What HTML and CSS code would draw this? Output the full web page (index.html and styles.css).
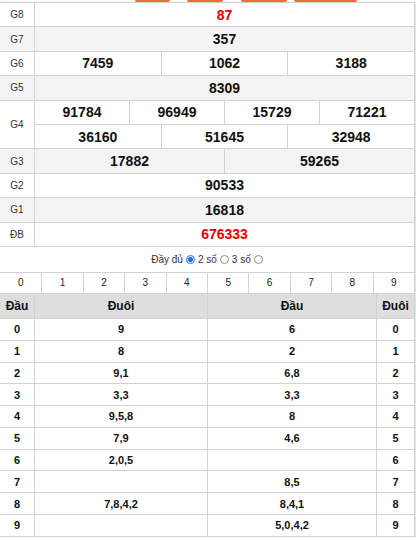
FILE: index.html
```html
<!DOCTYPE html>
<html lang="vi">
<head>
<meta charset="utf-8">
<link rel="stylesheet" href="styles.css">
</head>
<body>
<div class="tabs"><span class="tab t1"></span><span class="tab t2"></span><span class="tab t3"></span><span class="tab t4"></span></div>
<div class="card">
  <div class="res">
    <div class="row"><div class="lbl">G8</div><div class="vals"><div class="line"><div class="num red">87</div></div></div></div>
    <div class="row alt"><div class="lbl">G7</div><div class="vals"><div class="line"><div class="num">357</div></div></div></div>
    <div class="row"><div class="lbl">G6</div><div class="vals"><div class="line"><div class="num">7459</div><div class="num">1062</div><div class="num">3188</div></div></div></div>
    <div class="row alt"><div class="lbl">G5</div><div class="vals"><div class="line"><div class="num">8309</div></div></div></div>
    <div class="row"><div class="lbl">G4</div><div class="vals">
      <div class="line"><div class="num">91784</div><div class="num">96949</div><div class="num">15729</div><div class="num">71221</div></div>
      <div class="line"><div class="num">36160</div><div class="num">51645</div><div class="num">32948</div></div>
    </div></div>
    <div class="row alt"><div class="lbl">G3</div><div class="vals"><div class="line"><div class="num">17882</div><div class="num">59265</div></div></div></div>
    <div class="row"><div class="lbl">G2</div><div class="vals"><div class="line"><div class="num">90533</div></div></div></div>
    <div class="row alt"><div class="lbl">G1</div><div class="vals"><div class="line"><div class="num">16818</div></div></div></div>
    <div class="row"><div class="lbl">ĐB</div><div class="vals"><div class="line"><div class="num red">676333</div></div></div></div>
  </div>
  <div class="opts">
    <span>Đầy đủ</span><span class="radio on"></span><span>2 số</span><span class="radio"></span><span>3 số</span><span class="radio"></span>
  </div>
  <div class="digits">
    <span>0</span><span>1</span><span>2</span><span>3</span><span>4</span><span>5</span><span>6</span><span>7</span><span>8</span><span>9</span>
  </div>
  <div class="loto">
    <div class="h">Đầu</div><div class="h">Đuôi</div><div class="h">Đầu</div><div class="h">Đuôi</div>
    <div class="c">0</div><div class="c">9</div><div class="c">6</div><div class="c">0</div>
    <div class="c">1</div><div class="c">8</div><div class="c">2</div><div class="c">1</div>
    <div class="c">2</div><div class="c">9,1</div><div class="c">6,8</div><div class="c">2</div>
    <div class="c">3</div><div class="c">3,3</div><div class="c">3,3</div><div class="c">3</div>
    <div class="c">4</div><div class="c">9,5,8</div><div class="c">8</div><div class="c">4</div>
    <div class="c">5</div><div class="c">7,9</div><div class="c">4,6</div><div class="c">5</div>
    <div class="c">6</div><div class="c">2,0,5</div><div class="c"></div><div class="c">6</div>
    <div class="c">7</div><div class="c"></div><div class="c">8,5</div><div class="c">7</div>
    <div class="c">8</div><div class="c">7,8,4,2</div><div class="c">8,4,1</div><div class="c">8</div>
    <div class="c">9</div><div class="c"></div><div class="c">5,0,4,2</div><div class="c">9</div>
  </div>
</div>
</body>
</html>
```

FILE: styles.css
```css
html, body {
  margin: 0;
  padding: 0;
  background: #fff;
}
body {
  font-family: "Liberation Sans", Arial, sans-serif;
  color: #111;
}
.tabs {
  display: flex;
  height: 2px;
  padding-left: 135px;
}
.tab {
  display: block;
  height: 2px;
  background: #f26b3f;
  border-radius: 0 0 3px 3px;
}
.t1 { width: 35px; }
.t2 { width: 36px; margin-left: 17px; }
.t3 { width: 46px; margin-left: 18px; }
.t4 { width: 63px; margin-left: 7px; }

.card {
  width: 415px;
  box-sizing: border-box;
  border-top: 1px solid #d2d2d2;
  border-right: 1px solid #d2d2d2;
  box-shadow: 1px 1px 3px rgba(0, 0, 0, 0.18);
}
.row {
  display: flex;
  border-bottom: 1px solid #d2d2d2;
  background: #fff;
}
.row.alt { background: #f4f4f4; }
.lbl {
  flex: none;
  width: 35px;
  box-sizing: border-box;
  border-right: 1px solid #d2d2d2;
  display: flex;
  align-items: center;
  justify-content: center;
  font-size: 10px;
  color: #333;
}
.vals {
  flex: 1;
  display: flex;
  flex-direction: column;
}
.line {
  display: flex;
  height: 23.4px;
}
.line + .line { border-top: 1px solid #d2d2d2; }
.num {
  flex: 1;
  display: flex;
  align-items: center;
  justify-content: center;
  font-weight: bold;
  font-size: 14px;
  color: #111;
}
.num + .num { border-left: 1px solid #d2d2d2; }
.red { color: #e30000; }

.opts {
  height: 25px;
  border-bottom: 1px solid #d2d2d2;
  display: flex;
  align-items: center;
  justify-content: center;
  gap: 3px;
  font-size: 10px;
  color: #333;
}
.radio {
  display: inline-block;
  width: 9px;
  height: 9px;
  box-sizing: border-box;
  border-radius: 50%;
  border: 1px solid #8c8c8c;
  background: #fff;
}
.radio.on {
  border-color: #1a73e8;
  background: radial-gradient(circle, #1a73e8 0 2.2px, #fff 2.7px);
}
.digits {
  display: grid;
  grid-template-columns: repeat(10, 1fr);
  border-bottom: 1px solid #d2d2d2;
}
.digits span {
  height: 20px;
  display: flex;
  align-items: center;
  justify-content: center;
  font-size: 10px;
  color: #222;
}
.digits span + span { border-left: 1px solid #d2d2d2; }

.loto {
  display: grid;
  grid-template-columns: 35px 173px 169px 1fr;
}
.loto > div {
  box-sizing: border-box;
  border-bottom: 1px solid #d2d2d2;
  display: flex;
  align-items: center;
  justify-content: center;
  font-weight: bold;
}
.loto > div:not(:nth-child(4n)) { border-right: 1px solid #d2d2d2; }
.h {
  height: 25px;
  background: #dedede;
  font-size: 12px;
  color: #111;
}
.c {
  height: 21.8px;
  font-size: 11px;
  color: #111;
}
```
